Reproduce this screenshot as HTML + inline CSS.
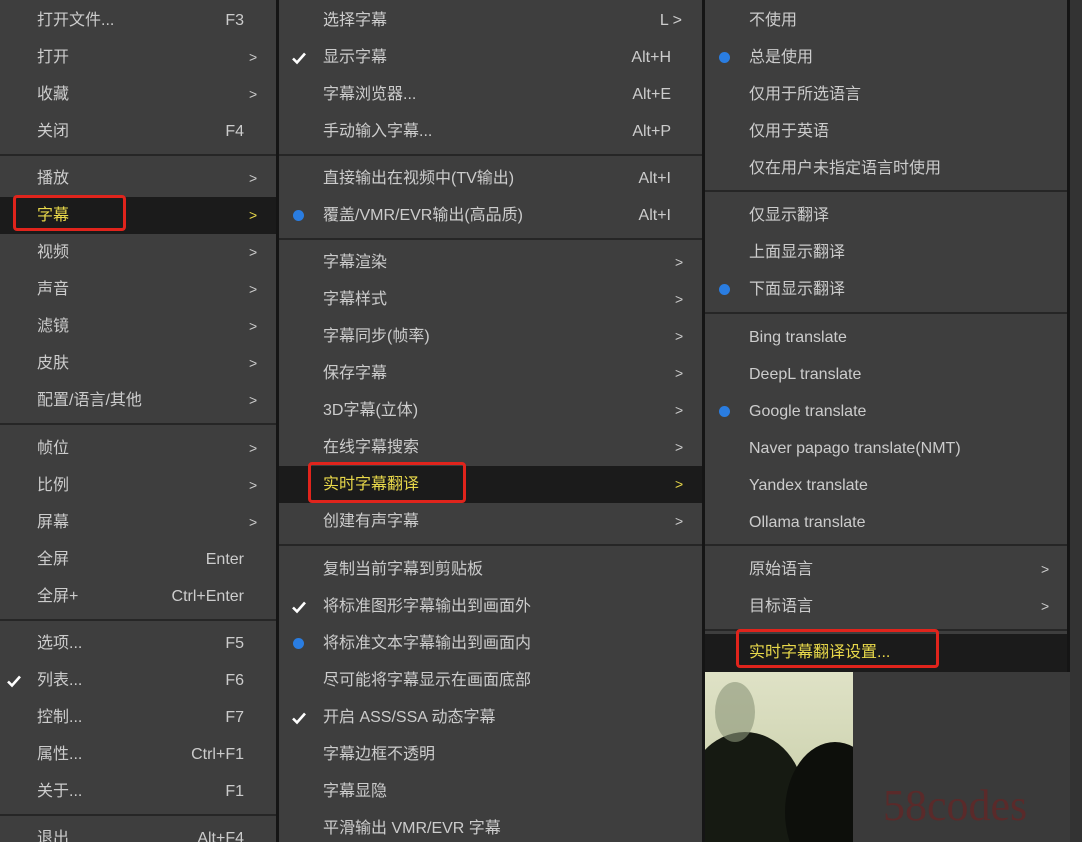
<!DOCTYPE html>
<html><head><meta charset="utf-8"><style>
*{margin:0;padding:0;box-sizing:border-box}
html,body{width:1082px;height:842px;overflow:hidden}
body{background:#3a3a3a;font-family:"Liberation Sans","Noto Sans CJK SC",sans-serif;font-size:16px;color:#cccccc;position:relative}
.m{position:absolute;top:0;background:#3e3e3e}
.i{position:absolute;left:0;right:0;height:37px;line-height:37px;white-space:nowrap}
.t{position:absolute}
.k{position:absolute;text-align:right}
.a{position:absolute;font-size:14px}
.s{position:absolute;left:0;right:0;height:2px;background:#262626}
.h{background:#1b1b1b;color:#e8d84a}
.box{position:absolute;border:3px solid #e0241c;border-radius:4px}
.ck{position:absolute;width:16px;height:16px;top:11px}
.dot{position:absolute;width:11px;height:11px;border-radius:50%;background:#2a7de1;top:13px}
</style></head><body>
<div style="position:absolute;left:276px;top:0;width:3px;height:842px;background:#151515"></div>
<div style="position:absolute;left:702px;top:0;width:3px;height:842px;background:#151515"></div>
<div style="position:absolute;left:1067px;top:0;width:3px;height:672px;background:#151515"></div>

<div class="m" style="left:0;width:276px;height:842px">
<div class="i" style="top:2px"><span class="t" style="left:37px">打开文件...</span><span class="k" style="right:32px">F3</span></div>
<div class="i" style="top:39px"><span class="t" style="left:37px">打开</span><span class="a" style="left:249px">&gt;</span></div>
<div class="i" style="top:76px"><span class="t" style="left:37px">收藏</span><span class="a" style="left:249px">&gt;</span></div>
<div class="i" style="top:113px"><span class="t" style="left:37px">关闭</span><span class="k" style="right:32px">F4</span></div>
<div class="s" style="top:154px"></div>
<div class="i" style="top:160px"><span class="t" style="left:37px">播放</span><span class="a" style="left:249px">&gt;</span></div>
<div class="i h" style="top:197px"><span class="t" style="left:37px">字幕</span><span class="a" style="left:249px">&gt;</span></div>
<div class="i" style="top:234px"><span class="t" style="left:37px">视频</span><span class="a" style="left:249px">&gt;</span></div>
<div class="i" style="top:271px"><span class="t" style="left:37px">声音</span><span class="a" style="left:249px">&gt;</span></div>
<div class="i" style="top:308px"><span class="t" style="left:37px">滤镜</span><span class="a" style="left:249px">&gt;</span></div>
<div class="i" style="top:345px"><span class="t" style="left:37px">皮肤</span><span class="a" style="left:249px">&gt;</span></div>
<div class="i" style="top:382px"><span class="t" style="left:37px">配置/语言/其他</span><span class="a" style="left:249px">&gt;</span></div>
<div class="s" style="top:423px"></div>
<div class="i" style="top:430px"><span class="t" style="left:37px">帧位</span><span class="a" style="left:249px">&gt;</span></div>
<div class="i" style="top:467px"><span class="t" style="left:37px">比例</span><span class="a" style="left:249px">&gt;</span></div>
<div class="i" style="top:504px"><span class="t" style="left:37px">屏幕</span><span class="a" style="left:249px">&gt;</span></div>
<div class="i" style="top:541px"><span class="t" style="left:37px">全屏</span><span class="k" style="right:32px">Enter</span></div>
<div class="i" style="top:578px"><span class="t" style="left:37px">全屏+</span><span class="k" style="right:32px">Ctrl+Enter</span></div>
<div class="s" style="top:619px"></div>
<div class="i" style="top:625px"><span class="t" style="left:37px">选项...</span><span class="k" style="right:32px">F5</span></div>
<div class="i" style="top:662px"><svg class="ck" style="left:6px" viewBox="0 0 16 16"><path d="M2 8.5l4 4 8-9" stroke="#fff" stroke-width="2.6" fill="none"/></svg><span class="t" style="left:37px">列表...</span><span class="k" style="right:32px">F6</span></div>
<div class="i" style="top:699px"><span class="t" style="left:37px">控制...</span><span class="k" style="right:32px">F7</span></div>
<div class="i" style="top:736px"><span class="t" style="left:37px">属性...</span><span class="k" style="right:32px">Ctrl+F1</span></div>
<div class="i" style="top:773px"><span class="t" style="left:37px">关于...</span><span class="k" style="right:32px">F1</span></div>
<div class="s" style="top:814px"></div>
<div class="i" style="top:820px"><span class="t" style="left:37px">退出</span><span class="k" style="right:32px">Alt+F4</span></div>
</div>
<div class="box" style="left:13px;top:195px;width:113px;height:36px"></div>

<div class="m" style="left:279px;width:423px;height:842px">
<div class="i" style="top:2px"><span class="t" style="left:44px">选择字幕</span><span class="k" style="right:20px">L &gt;</span></div>
<div class="i" style="top:39px"><svg class="ck" style="left:12px" viewBox="0 0 16 16"><path d="M2 8.5l4 4 8-9" stroke="#fff" stroke-width="2.6" fill="none"/></svg><span class="t" style="left:44px">显示字幕</span><span class="k" style="right:31px">Alt+H</span></div>
<div class="i" style="top:76px"><span class="t" style="left:44px">字幕浏览器...</span><span class="k" style="right:31px">Alt+E</span></div>
<div class="i" style="top:113px"><span class="t" style="left:44px">手动输入字幕...</span><span class="k" style="right:31px">Alt+P</span></div>
<div class="s" style="top:154px"></div>
<div class="i" style="top:160px"><span class="t" style="left:44px">直接输出在视频中(TV输出)</span><span class="k" style="right:31px">Alt+I</span></div>
<div class="i" style="top:197px"><span class="dot" style="left:14px"></span><span class="t" style="left:44px">覆盖/VMR/EVR输出(高品质)</span><span class="k" style="right:31px">Alt+I</span></div>
<div class="s" style="top:238px"></div>
<div class="i" style="top:244px"><span class="t" style="left:44px">字幕渲染</span><span class="a" style="left:396px">&gt;</span></div>
<div class="i" style="top:281px"><span class="t" style="left:44px">字幕样式</span><span class="a" style="left:396px">&gt;</span></div>
<div class="i" style="top:318px"><span class="t" style="left:44px">字幕同步(帧率)</span><span class="a" style="left:396px">&gt;</span></div>
<div class="i" style="top:355px"><span class="t" style="left:44px">保存字幕</span><span class="a" style="left:396px">&gt;</span></div>
<div class="i" style="top:392px"><span class="t" style="left:44px">3D字幕(立体)</span><span class="a" style="left:396px">&gt;</span></div>
<div class="i" style="top:429px"><span class="t" style="left:44px">在线字幕搜索</span><span class="a" style="left:396px">&gt;</span></div>
<div class="i h" style="top:466px"><span class="t" style="left:44px">实时字幕翻译</span><span class="a" style="left:396px">&gt;</span></div>
<div class="i" style="top:503px"><span class="t" style="left:44px">创建有声字幕</span><span class="a" style="left:396px">&gt;</span></div>
<div class="s" style="top:544px"></div>
<div class="i" style="top:551px"><span class="t" style="left:44px">复制当前字幕到剪贴板</span></div>
<div class="i" style="top:588px"><svg class="ck" style="left:12px" viewBox="0 0 16 16"><path d="M2 8.5l4 4 8-9" stroke="#fff" stroke-width="2.6" fill="none"/></svg><span class="t" style="left:44px">将标准图形字幕输出到画面外</span></div>
<div class="i" style="top:625px"><span class="dot" style="left:14px"></span><span class="t" style="left:44px">将标准文本字幕输出到画面内</span></div>
<div class="i" style="top:662px"><span class="t" style="left:44px">尽可能将字幕显示在画面底部</span></div>
<div class="i" style="top:699px"><svg class="ck" style="left:12px" viewBox="0 0 16 16"><path d="M2 8.5l4 4 8-9" stroke="#fff" stroke-width="2.6" fill="none"/></svg><span class="t" style="left:44px">开启 ASS/SSA 动态字幕</span></div>
<div class="i" style="top:736px"><span class="t" style="left:44px">字幕边框不透明</span></div>
<div class="i" style="top:773px"><span class="t" style="left:44px">字幕显隐</span></div>
<div class="i" style="top:810px"><span class="t" style="left:44px">平滑输出 VMR/EVR 字幕</span></div>
</div>
<div class="box" style="left:308px;top:462px;width:158px;height:41px"></div>

<div class="m" style="left:705px;width:362px;height:672px">
<div class="i" style="top:2px"><span class="t" style="left:44px">不使用</span></div>
<div class="i" style="top:39px"><span class="dot" style="left:14px"></span><span class="t" style="left:44px">总是使用</span></div>
<div class="i" style="top:76px"><span class="t" style="left:44px">仅用于所选语言</span></div>
<div class="i" style="top:113px"><span class="t" style="left:44px">仅用于英语</span></div>
<div class="i" style="top:150px"><span class="t" style="left:44px">仅在用户未指定语言时使用</span></div>
<div class="s" style="top:190px"></div>
<div class="i" style="top:197px"><span class="t" style="left:44px">仅显示翻译</span></div>
<div class="i" style="top:234px"><span class="t" style="left:44px">上面显示翻译</span></div>
<div class="i" style="top:271px"><span class="dot" style="left:14px"></span><span class="t" style="left:44px">下面显示翻译</span></div>
<div class="s" style="top:312px"></div>
<div class="i" style="top:319px"><span class="t" style="left:44px">Bing translate</span></div>
<div class="i" style="top:356px"><span class="t" style="left:44px">DeepL translate</span></div>
<div class="i" style="top:393px"><span class="dot" style="left:14px"></span><span class="t" style="left:44px">Google translate</span></div>
<div class="i" style="top:430px"><span class="t" style="left:44px">Naver papago translate(NMT)</span></div>
<div class="i" style="top:467px"><span class="t" style="left:44px">Yandex translate</span></div>
<div class="i" style="top:504px"><span class="t" style="left:44px">Ollama translate</span></div>
<div class="s" style="top:544px"></div>
<div class="i" style="top:551px"><span class="t" style="left:44px">原始语言</span><span class="a" style="left:336px">&gt;</span></div>
<div class="i" style="top:588px"><span class="t" style="left:44px">目标语言</span><span class="a" style="left:336px">&gt;</span></div>
<div class="s" style="top:629px"></div>
<div class="i h" style="top:634px;height:38px"><span class="t" style="left:44px">实时字幕翻译设置...</span></div>
</div>
<div class="box" style="left:736px;top:629px;width:203px;height:39px"></div>

<div style="position:absolute;left:705px;top:672px;width:148px;height:170px;overflow:hidden;background:#0e100c">
<div style="position:absolute;left:0;top:0;width:148px;height:100px;background:linear-gradient(180deg,#dfe2c6,#cfd4b2)"></div>
<div style="position:absolute;left:-20px;top:60px;width:120px;height:140px;border-radius:50%;background:#161a12"></div>
<div style="position:absolute;left:80px;top:70px;width:100px;height:140px;border-radius:50%;background:#0d0f0b"></div>
<div style="position:absolute;left:10px;top:10px;width:40px;height:60px;border-radius:50%;background:#8a9478;opacity:.6"></div>
</div>
<div style="position:absolute;left:1070px;top:0;width:12px;height:842px;background:#333"></div>
<div style="position:absolute;left:883px;top:780px;font-family:'Liberation Serif',serif;font-size:44px;color:#5a2a2a">58codes</div>
</body></html>
